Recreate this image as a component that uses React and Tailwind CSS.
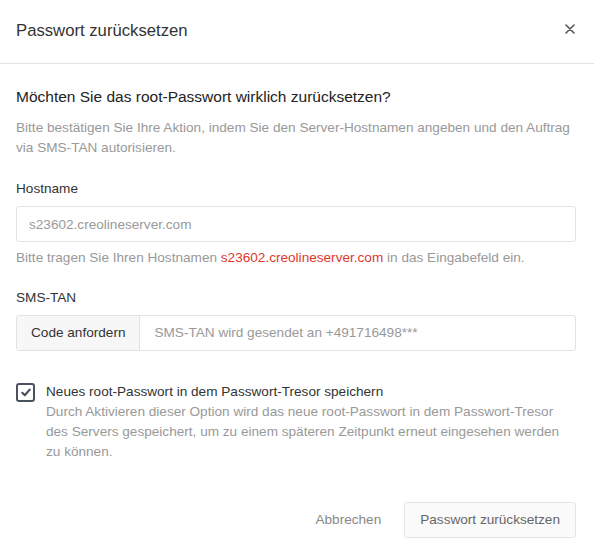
import { useState } from 'react';

function ResetPasswordModal() {
  const [saveInVault, setSaveInVault] = useState(true);

  return (
    <div className="w-[594px] h-[555px] bg-white text-[#333] font-['Liberation_Sans',Arial,sans-serif]">
      {/* Header */}
      <div className="h-[64px] flex items-center justify-between pl-4 pr-[19px] border-b border-[#e3e3e3]">
        <h2 className="text-[16.7px] text-[#333] -mt-[2px]">Passwort zurücksetzen</h2>
        <button className="text-[#555] -mt-[6px]" aria-label="Schließen">
          <svg width="10" height="10" viewBox="0 0 10 10" stroke="currentColor" strokeWidth="1.6" strokeLinecap="round">
            <path d="M1 1l8 8M9 1l-8 8" />
          </svg>
        </button>
      </div>

      {/* Body */}
      <div className="pl-4 pr-[18px] pt-[23px]">
        <h3 className="text-[15.5px] leading-5 text-[#222]">Möchten Sie das root-Passwort wirklich zurücksetzen?</h3>
        <p className="mt-[11px] text-[13.6px] leading-5 text-[#999]">
          Bitte bestätigen Sie Ihre Aktion, indem Sie den Server-Hostnamen angeben und den Auftrag via SMS-TAN autorisieren.
        </p>

        <label className="block mt-[21px] text-[13.6px] leading-5 text-[#333]">Hostname</label>
        <input
          className="mt-[7px] w-full h-[36px] px-3 border border-[#e2e2e2] rounded-[3px] text-[13.6px] placeholder:text-[#999] outline-none"
          placeholder="s23602.creolineserver.com"
        />
        <p className="mt-[6px] text-[13.6px] leading-5 text-[#999]">
          Bitte tragen Sie Ihren Hostnamen <span className="text-[#e0392b]">s23602.creolineserver.com</span> in das Eingabefeld ein.
        </p>

        <label className="block mt-5 text-[13.6px] leading-5 text-[#333]">SMS-TAN</label>
        <div className="mt-[7px] flex h-[36px] border border-[#e2e2e2] rounded-[3px] overflow-hidden">
          <button className="px-[14px] bg-[#f7f7f7] border-r border-[#e2e2e2] text-[13.6px] text-[#333]">Code anfordern</button>
          <input
            className="flex-1 px-[14px] text-[13.6px] placeholder:text-[#999] outline-none"
            placeholder="SMS-TAN wird gesendet an +491716498***"
          />
        </div>

        <div className="mt-[31px] flex gap-[11px]">
          <button
            onClick={() => setSaveInVault((v) => !v)}
            className="mt-[1px] w-[19px] h-[19px] shrink-0 border-2 border-[#4a5260] rounded-[3px] flex items-center justify-center"
          >
            {saveInVault && (
              <svg width="10" height="9" viewBox="0 0 10 9" fill="none" stroke="#4a5260" strokeWidth="2.2" strokeLinecap="round" strokeLinejoin="round">
                <path d="M1.3 4.8l2.5 2.4L8.7 1.6" />
              </svg>
            )}
          </button>
          <div className="text-[13.6px] leading-5">
            <div className="text-[#333]">Neues root-Passwort in dem Passwort-Tresor speichern</div>
            <div className="text-[#999]">
              Durch Aktivieren dieser Option wird das neue root-Passwort in dem Passwort-Tresor des Servers gespeichert, um zu einem späteren Zeitpunkt erneut eingesehen werden zu können.
            </div>
          </div>
        </div>
      </div>

      {/* Footer */}
      <div className="mt-[40px] pl-4 pr-[18px] flex justify-end items-center gap-[23px]">
        <button className="text-[13.6px] text-[#888]">Abbrechen</button>
        <button className="h-[36px] px-[15px] bg-[#fafafa] border border-[#e5e5e5] rounded-[3px] text-[13.6px] text-[#666]">
          Passwort zurücksetzen
        </button>
      </div>
    </div>
  );
}

export default function App() {
  return <ResetPasswordModal />;
}
